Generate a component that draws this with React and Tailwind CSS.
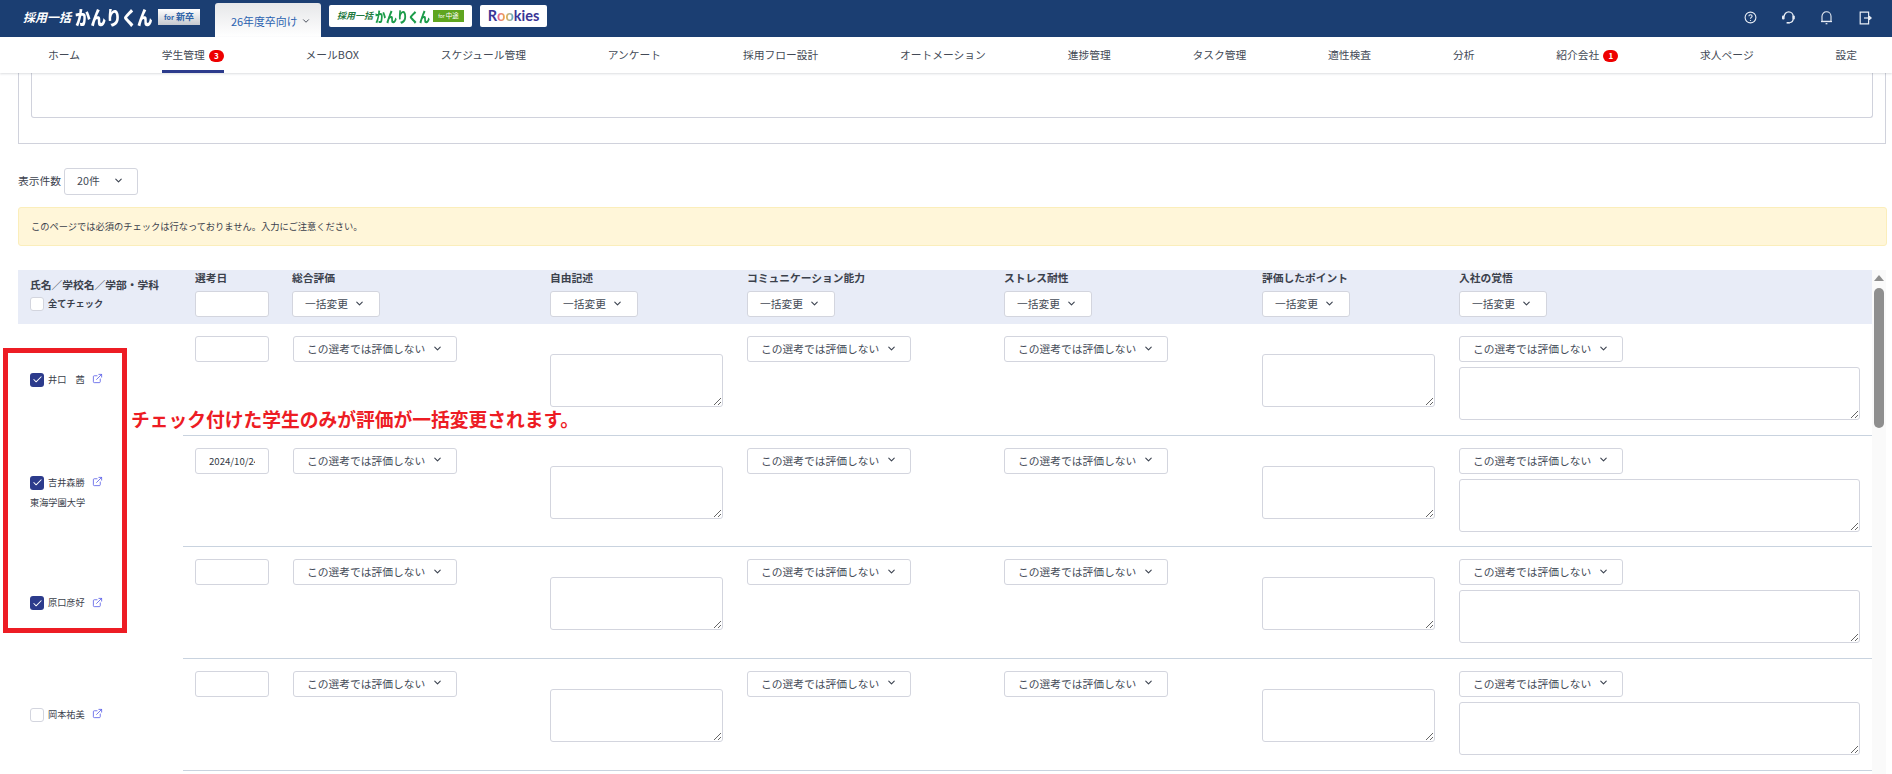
import React from 'react';
import { Check, ChevronDown, ExternalLink } from 'lucide-react';

const navItems = [
  { label: 'ホーム' },
  { label: '学生管理', badge: '3', active: true },
  { label: 'メールBOX' },
  { label: 'スケジュール管理' },
  { label: 'アンケート' },
  { label: '採用フロー設計' },
  { label: 'オートメーション' },
  { label: '進捗管理' },
  { label: 'タスク管理' },
  { label: '適性検査' },
  { label: '分析' },
  { label: '紹介会社', badge: '1' },
  { label: '求人ページ' },
  { label: '設定' },
];

const students = [
  { name: '井口　茜', checked: true },
  { name: '吉井森勝', school: '東海学園大学', date: '2024/10/24', checked: true },
  { name: '原口彦好', checked: true },
  { name: '岡本祐美', checked: false },
];

const columnGrid = 'grid grid-cols-[97px_258px_197px_257px_258px_197px_1fr]';

const Select = ({ label, className }) => (
  <div className={`flex h-[26px] items-center justify-between rounded-[3px] border border-[#d3d5de] bg-white text-[10.75px] text-[#444b57] ${className}`}>
    <span className="whitespace-nowrap">{label}</span>
    <ChevronDown size={11} strokeWidth={2.4} className="-mt-[2px] text-[#3c4350]" />
  </div>
);

const BulkSelect = () => <Select label="一括変更" className="w-[88px] pl-[12px] pr-[14px]" />;
const RowSelect = ({ className = '' }) => (
  <Select label="この選考では評価しない" className={`w-[164px] pl-[13px] pr-[13px] ${className}`} />
);

const Textarea = ({ className }) => (
  <textarea readOnly className={`block h-[53px] rounded-[3px] border border-[#d3d5de] bg-white ${className}`} />
);

const Checkbox = ({ checked }) =>
  checked ? (
    <span className="flex h-[14px] w-[14px] shrink-0 items-center justify-center rounded-[3px] bg-[#2c3b8c]">
      <Check size={11} strokeWidth={2.2} className="text-white" />
    </span>
  ) : (
    <span className="h-[14px] w-[14px] shrink-0 rounded-[3px] border border-[#d3d5de] bg-white" />
  );

const HeaderCell = ({ title, children }) => (
  <div className="pt-px">
    <div className="mb-[6px] h-[14px] whitespace-nowrap text-[10.75px] leading-[14px] font-bold text-[#3b414c]">{title}</div>
    {children}
  </div>
);

const StudentRow = ({ student }) => (
  <div className="flex h-[111.67px]">
    <div className="flex w-[165px] shrink-0 flex-col justify-center pl-[12px]">
      <div className="flex items-center">
        <Checkbox checked={student.checked} />
        <span className="ml-[4px] whitespace-nowrap text-[9.2px] text-[#3b414c]">{student.name}</span>
        <ExternalLink size={11} strokeWidth={1.8} className="ml-[7px] -mt-[2px] text-[#5a5fe8]" />
      </div>
      {student.school && <div className="mt-[7px] text-[9.2px] leading-[10px] text-[#3b414c]">{student.school}</div>}
    </div>
    <div className={`${columnGrid} flex-1 border-b border-[#c9d3df] pl-[12px] pt-[12px]`}>
      <input
        readOnly
        defaultValue={student.date}
        className="h-[26px] w-[74px] rounded-[3px] border border-[#d3d5de] bg-white px-[13px] text-[9.6px] text-[#333a45] outline-none"
      />
      <RowSelect className="ml-px" />
      <Textarea className="mt-[18px] w-[173px]" />
      <RowSelect />
      <RowSelect />
      <Textarea className="mt-[18px] w-[173px]" />
      <div>
        <RowSelect />
        <Textarea className="mt-[5px] w-[401px]" />
      </div>
    </div>
  </div>
);

const HeaderIcons = () => (
  <div className="flex items-center pr-[20px] text-[#e8edf5]">
    <svg width="13" height="13" viewBox="0 0 13 13" fill="none" stroke="currentColor" strokeWidth="1.1">
      <circle cx="6.5" cy="6.5" r="5.4" />
      <path d="M4.9 5.2c0-2 3.2-2 3.2 0 0 1.2-1.6 1.2-1.6 2.5" />
      <path d="M6.5 9v.9" />
    </svg>
    <svg className="ml-[24px]" width="15" height="15" viewBox="0 0 15 15" fill="none" stroke="currentColor" strokeWidth="1.3">
      <path d="M3.2 6.4a4.5 4.5 0 0 1 9 0v2.4a4 4 0 0 1-3.6 3.9" />
      <rect x="1" y="5.6" width="2.6" height="4" rx="1.1" fill="currentColor" stroke="none" />
      <rect x="11.6" y="5.6" width="2.2" height="4" rx="1" fill="currentColor" stroke="none" />
      <path d="M5.6 12.8h3.2" strokeWidth="1.6" />
    </svg>
    <svg className="ml-[24px]" width="13" height="15" viewBox="0 0 13 15" fill="none" stroke="currentColor" strokeWidth="1.1">
      <path d="M2 11.4V6.2a4.5 4.5 0 0 1 9 0v5.2z" />
      <path d="M1 11.6h11" />
      <path d="M5.6 13.7h1.8" strokeWidth="1.2" />
    </svg>
    <svg className="ml-[26px]" width="13" height="14" viewBox="0 0 13 14" fill="none" stroke="currentColor" strokeWidth="1.2">
      <path d="M9.6 4V1.2H1.2v11.6h8.4V10" />
      <path d="M5 7h7" />
      <path d="M9.6 4.8 12.2 7 9.6 9.2z" fill="currentColor" />
    </svg>
  </div>
);

const TopBar = () => (
  <header className="flex h-[37px] items-start justify-between bg-[#1b3e72]">
    <div className="flex items-start">
      <div className="ml-[23px] flex h-[34px] w-[177px] items-center whitespace-nowrap text-white">
        <span className="w-[52px] text-[12px] font-bold italic">採用一括</span>
        <span className="w-[83px] origin-center scale-y-[1.25] text-[15.5px] leading-none font-black">かんりくん</span>
        <span className="flex h-[16px] w-[42px] items-center justify-center gap-[2px] bg-gradient-to-b from-white to-[#c6c9cf] text-[9px] font-bold text-[#2c62a8]">
          <span className="text-[7px]">for</span>新卒
        </span>
      </div>
      <div className="mt-[3px] ml-[15px] flex h-[34px] w-[106px] items-center gap-[3px] rounded-t-[3px] bg-gradient-to-b from-[#e6e7e9] to-white pt-[2px] pl-[16px] text-[10.9px] text-[#2a62b0]">
        26年度卒向け
        <ChevronDown size={10} strokeWidth={2.2} className="text-[#3c4350]" />
      </div>
      <div className="mt-[5px] ml-[8px] flex h-[22px] w-[143px] items-center whitespace-nowrap rounded-[2px] bg-white pl-[8px]">
        <span className="w-[38px] text-[9px] font-bold text-[#1f7a3f] italic">採用一括</span>
        <span className="w-[58px] origin-center scale-y-[1.25] text-[11px] leading-none font-black text-[#1c9c4a]">かんりくん</span>
        <span className="flex h-[12px] w-[31px] items-center justify-center gap-px bg-[#5fa51f] text-[6.5px] text-white">
          <span className="text-[5px]">for</span>中途
        </span>
      </div>
      <div className="mt-[5px] ml-[8px] flex h-[22px] w-[67px] items-center justify-center rounded-[2px] bg-white font-['Lato',sans-serif] text-[14.5px] font-bold text-[#3a3596]">
        R<span className="bg-gradient-to-r from-[#e0569a] via-[#f0b030] to-[#38a8d8] bg-clip-text text-transparent">oo</span>kies
      </div>
    </div>
    <div className="flex h-[35px] items-center">
      <HeaderIcons />
    </div>
  </header>
);

const NavBar = () => (
  <nav className="relative z-10 flex h-[36px] items-stretch justify-between bg-white pr-[35px] pl-[48px] shadow-[0_1px_2px_rgba(60,70,90,0.18)]">
    {navItems.map((item) => (
      <div
        key={item.label}
        className={`flex items-center gap-[4px] whitespace-nowrap pt-[1px] text-[10.75px] text-[#434a56] ${item.active ? 'border-b-[3px] border-[#2c3b8c] pt-[4px]' : ''}`}
      >
        {item.label}
        {item.badge && (
          <span className="flex h-[12px] w-[15px] items-center justify-center rounded-full bg-[#ee0000] text-[8px] font-bold text-white">
            {item.badge}
          </span>
        )}
      </div>
    ))}
  </nav>
);

const App = () => {
  return (
    <div className="relative h-[774px] w-[1892px] overflow-hidden bg-white font-['Noto_Sans_CJK_JP','Noto_Sans',sans-serif] text-[#333a45]">
      <TopBar />
      <NavBar />

      <div className="ml-[18px] mr-[6px] h-[71px] border-x border-b border-[#d0d2dc] px-[12px] pb-[25px]">
        <div className="h-full rounded-b-[3px] border-x border-b border-[#d0d2dc]" />
      </div>

      <div className="mt-[24px] ml-[18px] flex items-center gap-[3px]">
        <span className="text-[10.75px] text-[#3b414c]">表示件数</span>
        <Select label="20件" className="h-[27px] w-[74px] pl-[12px] pr-[13px]" />
      </div>

      <div className="mt-[12px] ml-[18px] mr-[5px] flex h-[39px] items-center rounded-[3px] border border-[#fbeebb] bg-[#fff6d9] pl-[12px] text-[9.25px] text-[#3b414c]">
        このページでは必須のチェックは行なっておりません。入力にご注意ください。
      </div>

      <div className="mt-[24px] ml-[18px] flex">
        <div className="w-[1854px] shrink-0">
          <div className="flex h-[54px] bg-[#e8ecf7]">
            <div className="w-[165px] shrink-0 pl-[12px] pt-[7px]">
              <div className="text-[10.75px] leading-[16px] font-bold text-[#3b414c]">氏名／学校名／学部・学科</div>
              <div className="mt-[4px] flex items-center gap-[4px]">
                <Checkbox checked={false} />
                <span className="text-[9.2px] font-bold text-[#3b414c]">全てチェック</span>
              </div>
            </div>
            <div className={`${columnGrid} flex-1 pl-[12px]`}>
              <HeaderCell title="選考日">
                <input readOnly className="h-[26px] w-[74px] rounded-[3px] border border-[#d3d5de] bg-white outline-none" />
              </HeaderCell>
              <HeaderCell title="総合評価"><BulkSelect /></HeaderCell>
              <HeaderCell title="自由記述"><BulkSelect /></HeaderCell>
              <HeaderCell title="コミュニケーション能力"><BulkSelect /></HeaderCell>
              <HeaderCell title="ストレス耐性"><BulkSelect /></HeaderCell>
              <HeaderCell title="評価したポイント"><BulkSelect /></HeaderCell>
              <HeaderCell title="入社の覚悟"><BulkSelect /></HeaderCell>
            </div>
          </div>
          {students.map((student) => (
            <StudentRow key={student.name} student={student} />
          ))}
        </div>

        <div className="flex h-[504px] w-[14px] flex-col items-center bg-[#fafafa] pt-[5px]">
          <div className="h-0 w-0 border-x-[5px] border-b-[6px] border-x-transparent border-b-[#8f8f8f]" />
          <div className="mt-[7px] h-[140px] w-[10px] rounded-full bg-[#8f8f8f]" />
        </div>
      </div>

      {/* 注釈: チェック対象の赤枠と説明文 */}
      <div className="absolute top-[348px] left-[3px] h-[285px] w-[124px] border-[5px] border-[#ed1c24]" />
      <div className="absolute top-[406px] left-[131px] whitespace-nowrap text-[18.75px] leading-[26px] font-bold text-[#ed1c24]">
        チェック付けた学生のみが評価が一括変更されます。
      </div>
    </div>
  );
};

export default App;
